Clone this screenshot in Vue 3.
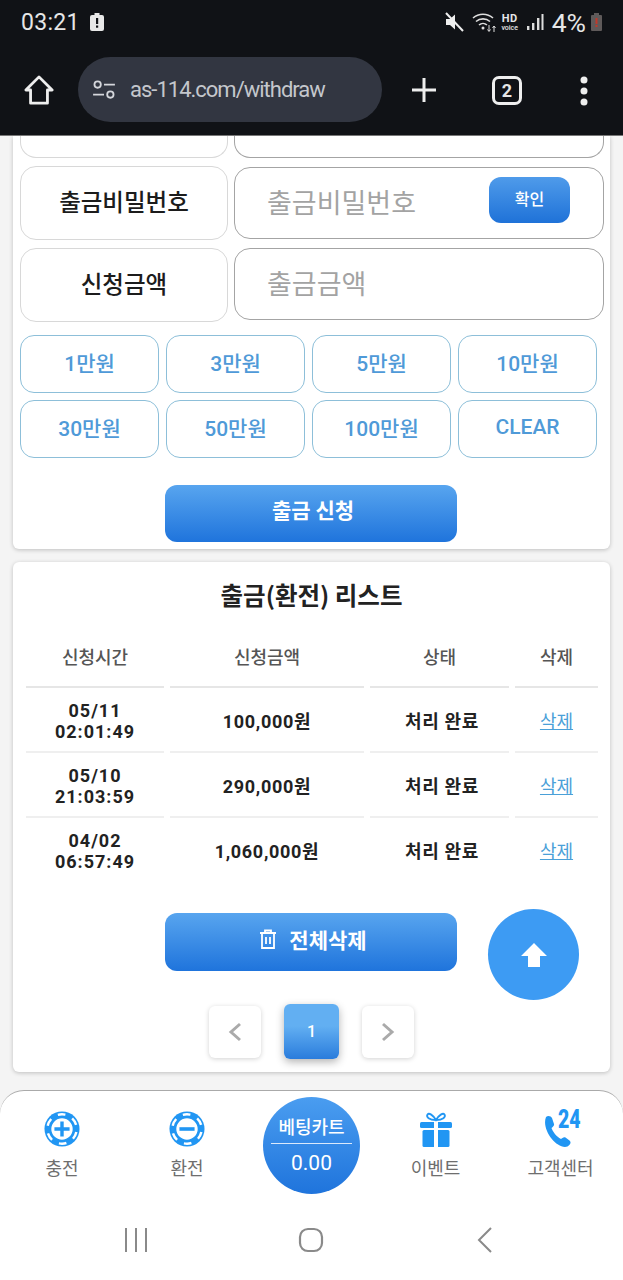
<script setup>
const amounts = ['1만원','3만원','5만원','10만원','30만원','50만원','100만원','CLEAR']
const rows = [
  { d:'05/11', t:'02:01:49', a:'100,000원' },
  { d:'05/10', t:'21:03:59', a:'290,000원' },
  { d:'04/02', t:'06:57:49', a:'1,060,000원' },
]
</script>

<template>
  <div class="screen">
    <header class="chrome">
      <div class="status">
        <span class="time">03:21</span>
        <svg class="alert" width="14" height="18" viewBox="0 0 14 18"><path d="M4.5 0h5v2H12a2 2 0 0 1 2 2v12a2 2 0 0 1-2 2H2a2 2 0 0 1-2-2V4a2 2 0 0 1 2-2h2.500z" fill="#e8e8e8"/><rect x="6" y="5" width="2.200" height="6" fill="#101216"/><rect x="6" y="12.500" width="2.200" height="2.200" fill="#101216"/></svg>
        <span class="spacer"></span>
        <svg width="20" height="20" viewBox="0 0 20 20" class="mute"><path d="M1 7h4l5-4.500v15L5 13H1z" fill="#eee"/><path d="M1 1l17 18" stroke="#eee" stroke-width="2"/></svg>
        <svg width="26" height="22" viewBox="0 0 26 22" class="wifi" fill="none" stroke="#ddd" stroke-width="1.600"><path d="M1 7a15 15 0 0 1 20 0M4 10.500a10.500 10.500 0 0 1 14 0M7 14a6 6 0 0 1 8 0"/><circle cx="11" cy="17" r="1.500" fill="#ddd" stroke="none"/><path d="M17 14v6M15.500 18.500l1.500 2 1.500-2M22 21v-6M20.500 17l1.500-2 1.500 2" stroke-width="1"/></svg>
        <span class="hd"><b>HD</b><i>voice</i></span>
        <svg width="18" height="18" viewBox="0 0 18 18" class="signal" fill="#ddd"><rect x="1" y="13" width="2.400" height="4"/><rect x="6" y="10" width="2.400" height="7"/><rect x="11" y="5" width="2.400" height="12"/><rect x="15.500" y="1" width="2" height="16"/></svg>
        <span class="pct">4%</span>
        <svg class="batt" width="11" height="18" viewBox="0 0 11 18"><path d="M3 0h5v2h2a1 1 0 0 1 1 1v14a1 1 0 0 1-1 1H1a1 1 0 0 1-1-1V3a1 1 0 0 1 1-1h2z" fill="#5f5a5a"/><rect x="4.500" y="5" width="2" height="6" fill="#c0392b"/><rect x="4.500" y="12" width="2" height="2" fill="#c0392b"/></svg>
      </div>
      <div class="toolbar">
        <svg class="home" width="30" height="30" viewBox="0 0 32 32" fill="none" stroke="#eee" stroke-width="3" stroke-linejoin="round"><path d="M2 16L16 2l14 14h-5v14H7V16z"/></svg>
        <div class="omni">
          <svg width="24" height="20" viewBox="0 0 26 22" fill="none" stroke="#d5d7dc" stroke-width="2"><circle cx="6" cy="5" r="3.500"/><path d="M13 5h12M1 16h12"/><circle cx="20" cy="16" r="3.500"/></svg>
          <span class="url">as-114.com/withdraw</span>
        </div>
        <svg class="plus" width="28" height="28" viewBox="0 0 28 28" stroke="#eee" stroke-width="3"><path d="M14 2v24M2 14h24"/></svg>
        <span class="tabs">2</span>
        <svg class="more" width="10" height="30" viewBox="0 0 10 30" fill="#eee"><circle cx="5" cy="4" r="3.500"/><circle cx="5" cy="15" r="3.500"/><circle cx="5" cy="26" r="3.500"/></svg>
      </div>
    </header>

    <main class="page">
      <section class="card form-card">
        <div class="form-row stub">
          <div class="label"></div>
          <div class="field"></div>
        </div>
        <div class="form-row">
          <div class="label">출금비밀번호</div>
          <div class="field first">
            <span class="ph">출금비밀번호</span>
            <button class="confirm">확인</button>
          </div>
        </div>
        <div class="form-row">
          <div class="label">신청금액</div>
          <div class="field"><span class="ph">출금금액</span></div>
        </div>
        <div class="amounts">
          <button v-for="a in amounts" :key="a" class="amt">{{ a }}</button>
        </div>
        <button class="primary">출금 신청</button>
      </section>

      <section class="card list-card">
        <h2>출금(환전) 리스트</h2>
        <table>
          <colgroup><col class="c1"><col class="c2"><col class="c3"><col class="c4"></colgroup>
          <thead><tr><th>신청시간</th><th>신청금액</th><th>상태</th><th>삭제</th></tr></thead>
          <tbody>
            <tr v-for="r in rows" :key="r.d">
              <td class="when">{{ r.d }}<br>{{ r.t }}</td>
              <td>{{ r.a }}</td>
              <td class="state">처리 완료</td>
              <td><a class="del">삭제</a></td>
            </tr>
          </tbody>
        </table>
        <div class="delete-wrap">
          <button class="primary del-all">
            <svg width="18" height="20" viewBox="0 0 18 20" fill="none" stroke="#fff" stroke-width="1.800"><path d="M1 4h16M6 4V1.500h6V4M3 4v15h12V4M7 8v7M11 8v7"/></svg>
            전체삭제
          </button>
          <button class="fab" aria-label="위로">
            <svg width="26" height="26" viewBox="0 0 26 26" fill="#fff"><path d="M13 1l13 13h-7v11H7V14H0z"/></svg>
          </button>
        </div>
        <div class="pager">
          <button class="pg"><svg width="14" height="20" viewBox="0 0 14 20" fill="none" stroke="#aaa" stroke-width="3"><path d="M12 2L3 10l9 8"/></svg></button>
          <button class="pg on">1</button>
          <button class="pg"><svg width="14" height="20" viewBox="0 0 14 20" fill="none" stroke="#aaa" stroke-width="3"><path d="M2 2l9 8-9 8"/></svg></button>
        </div>
      </section>
    </main>

    <nav class="bottom">
      <div class="tab">
        <svg width="36" height="36" viewBox="0 0 38 38"><circle cx="19" cy="19" r="18.500" fill="#2196f3"/><circle cx="19" cy="19" r="15.500" fill="none" stroke="#fff" stroke-width="2.600" stroke-dasharray="8 8.230" transform="rotate(12 19 19)"/><circle cx="19" cy="19" r="12" fill="#fff"/><circle cx="19" cy="19" r="12" fill="none" stroke="#2196f3" stroke-width="1.400"/><path d="M19 11v16M11 19h16" stroke="#2196f3" stroke-width="3.600"/></svg>
        <span>충전</span>
      </div>
      <div class="tab">
        <svg width="36" height="36" viewBox="0 0 38 38"><circle cx="19" cy="19" r="18.500" fill="#2196f3"/><circle cx="19" cy="19" r="15.500" fill="none" stroke="#fff" stroke-width="2.600" stroke-dasharray="8 8.230" transform="rotate(12 19 19)"/><circle cx="19" cy="19" r="12" fill="#fff"/><circle cx="19" cy="19" r="12" fill="none" stroke="#2196f3" stroke-width="1.400"/><path d="M11 19h16" stroke="#2196f3" stroke-width="3.800"/></svg>
        <span>환전</span>
      </div>
      <div class="cart">
        <div class="cart-t">베팅카트</div>
        <div class="cart-v">0.00</div>
      </div>
      <div class="tab">
        <svg width="32" height="36" viewBox="0 0 32 36" fill="#2196f3"><path d="M16 9C13 4 9 1.500 7.500 3.500 6 6 9 9 16 9c7 0 10-3 8.500-5.500C23 1.500 19 4 16 9z" fill="none" stroke="#2196f3" stroke-width="1.800"/><rect x="0" y="11" width="32" height="6" rx="1.500"/><rect x="2.500" y="19" width="27" height="17" rx="1.500"/><rect x="14" y="11" width="4" height="25" fill="#fff"/></svg>
        <span>이벤트</span>
      </div>
      <div class="tab">
        <div class="call">
          <svg width="30" height="32" viewBox="0 0 30 32" fill="#2196f3"><path d="M4 2c2-2 5-1 6 1l2 6c.5 1.500-1 3-2.500 4 1 3 5 9 9.500 11 1-1 3-2.500 4.500-1.500l4 3c2 1.500 1 4-2 6C15 35 -1 15 4 2z"/></svg>
          <b>24</b>
        </div>
        <span>고객센터</span>
      </div>
    </nav>

    <footer class="sysnav">
      <svg width="26" height="26" viewBox="0 0 26 26" stroke="#8a8a8a" stroke-width="2"><path d="M3 1v24M13 1v24M23 1v24"/></svg>
      <svg width="26" height="26" viewBox="0 0 26 26" fill="none" stroke="#8a8a8a" stroke-width="2.200"><rect x="2" y="2" width="22" height="22" rx="8"/></svg>
      <svg width="18" height="28" viewBox="0 0 18 28" fill="none" stroke="#8a8a8a" stroke-width="2"><path d="M15 2L3 14l12 12"/></svg>
    </footer>
  </div>
</template>

<style scoped>
.screen { width: 623px; height: 1280px; overflow: hidden; display: flex; flex-direction: column; background: #f4f4f4; font-family: "Noto Sans CJK KR", Roboto, sans-serif; }
button { font-family: inherit; border: none; padding: 0; }

.chrome { flex: none; height: 136px; box-sizing: border-box; background: #101216; border-bottom: 1px solid #777; color: #e6e6e6; }
.status { height: 44px; display: flex; align-items: center; padding: 0 21px 0 21px; }
.time { font: 400 23px Roboto, sans-serif; letter-spacing: .3px; }
.alert { margin-left: 10px; }
.spacer { flex: 1; }
.wifi { margin-left: 7px; }
.hd { width: 18px; display: flex; flex-direction: column; align-items: center; margin-left: 3px; font-family: Roboto, sans-serif; }
.hd b { font-size: 11px; line-height: 11px; letter-spacing: .5px; }
.hd i { font-size: 7px; line-height: 8px; font-style: normal; font-weight: 500; }
.signal { margin-left: 7px; }
.pct { font: 400 26.500px Roboto, sans-serif; margin-left: 8px; }
.batt { margin-left: 5px; }
.toolbar { height: 78px; margin-top: 13px; display: flex; align-items: flex-start; }
.home { margin: 18px 0 0 24px; }
.omni { width: 304px; height: 65px; margin-left: 24px; border-radius: 33px; background: #323641; display: flex; align-items: center; padding-left: 14px; box-sizing: border-box; gap: 14px; }
.url { font: 400 22px Roboto, sans-serif; letter-spacing: -1px; color: #c4c7cc; }
.plus { margin: 19px 0 0 28px; }
.tabs { box-sizing: border-box; width: 30px; height: 29px; margin: 19px 0 0 54px; border: 3px solid #eee; border-radius: 7px; font: 700 18px/23px Roboto, sans-serif; text-align: center; }
.more { margin: 19px 0 0 57px; }

.page { flex: 1; min-height: 0; padding: 0 13px; overflow: hidden; }
.card { background: #fff; border-radius: 0 0 6px 6px; box-shadow: 0 1px 4px rgba(0,0,0,.22); }
.form-card { padding: 0 7px 7px; height: 413px; box-sizing: border-box; margin-bottom: 13px; }
.form-row { display: grid; grid-template-columns: 208px 370px; gap: 6px; height: 74px; margin-bottom: 8px; }
.form-row.stub { height: 22px; }
.form-row.stub > div { height: auto; border-radius: 0 0 16px 16px; border-top: none; }
.label { box-sizing: border-box; padding-bottom: 4px; border: 1px solid #d8d8d8; border-radius: 16px; display: flex; align-items: center; justify-content: center; font-size: 23.500px; font-weight: 500; color: #1c1c1c; }
.field { position: relative; box-sizing: border-box; border: 1px solid #a4a4a4; border-radius: 16px; display: flex; align-items: center; padding: 0 0 4px 32px; height: 72px; }
.field.first { margin-top: 1px; }
.ph { font-size: 27px; color: #a3a3a3; }
.confirm { position: absolute; right: 33px; top: 9px; width: 81px; height: 46px; padding-bottom: 4px; border-radius: 12px; background: linear-gradient(#4f9bea, #1f72d8); color: #fff; font-size: 16px; font-weight: 500; }
.amounts { display: grid; grid-template-columns: repeat(4, 139px); gap: 7px; margin-top: 13px; }
.amt { height: 58px; padding-bottom: 4px; background: #fff; border: 1px solid #8dbfd9; border-radius: 14px; color: #4f9ad8; font-size: 21px; font-weight: 500; font-family: Roboto, "Noto Sans CJK KR", sans-serif; }
.primary { display: block; width: 292px; height: 57px; padding: 0 0 10px 4px; border-radius: 12px; background: linear-gradient(#58a5ef, #1f74dc); color: #fff; font-size: 21px; font-weight: 700; margin: 27px 0 0 145px; }

.list-card { border-radius: 6px; padding: 13px 13px 0; height: 510px; box-sizing: border-box; }
h2 { margin: 0; font-size: 24.500px; line-height: 40px; font-weight: 700; text-align: center; color: #222; }
table { border-collapse: separate; border-spacing: 6px 0; width: 584px; margin: 19px 0 0 -6px; table-layout: fixed; }
.c1 { width: 138px; } .c2 { width: 194px; } .c3 { width: 139px; } .c4 { width: 83px; }
th { height: 44px; padding: 0 0 8px; border-bottom: 2px solid #e6e6e6; font-size: 18px; font-weight: 500; color: #555; }
td { height: 59px; padding: 4px 0 0; border-bottom: 2px solid #efefef; text-align: center; font: 700 18px/21px Roboto, "Noto Sans CJK KR", sans-serif; color: #222; letter-spacing: .7px; }
tbody tr:last-child td { border-bottom-color: transparent; }
td.when { padding-top: 2px; height: 61px; letter-spacing: 1px; }
.state { padding-left: 5px; }
.del { color: #4aa0d8; text-decoration: underline; font-weight: 400; letter-spacing: 0; }
.delete-wrap { position: relative; height: 92px; }
.del-all { position: absolute; left: 139px; top: 30px; height: 58px; margin: 0; padding-bottom: 6px; display: flex; align-items: center; justify-content: center; gap: 12px; }
.fab { position: absolute; left: 462px; top: 26px; width: 91px; height: 91px; border-radius: 50%; background: #3d9bf3; display: flex; align-items: center; justify-content: center; }
.pager { display: flex; justify-content: center; gap: 23px; margin-top: 31px; }
.pg { width: 52px; height: 52px; border-radius: 6px; background: #fff; box-shadow: 0 1px 5px rgba(0,0,0,.18); display: flex; align-items: center; justify-content: center; }
.pg.on { width: 55px; height: 55px; margin-top: -2px; background: linear-gradient(#62aff2 40%, #2a7cdc); color: #fff; font: 500 16px Roboto, sans-serif; box-shadow: 0 3px 8px rgba(0,0,0,.3); }

.bottom { flex: none; height: 110px; box-sizing: border-box; background: #fff; border-top: 1px solid #aaa; border-radius: 24px 24px 0 0; display: grid; grid-template-columns: 124px 126px 123px 125px 125px; padding-top: 20px; }
.tab { display: flex; flex-direction: column; align-items: center; gap: 8px; font-size: 18px; color: #6e6e6e; }
.tab span { line-height: 24px; }
.cart { justify-self: center; width: 97px; height: 97px; margin-top: -14px; border-radius: 50%; background: linear-gradient(#4a9df0, #1f74dc); color: #fff; text-align: center; }
.cart-t { margin: 14px 8px 0; padding-bottom: 2px; border-bottom: 1px solid #dbe9fb; font-size: 18px; line-height: 30px; font-weight: 500; white-space: nowrap; }
.cart-v { font: 400 21px/38px Roboto, sans-serif; }
.call { position: relative; width: 38px; height: 36px; padding-top: 4px; box-sizing: border-box; }
.call b { position: absolute; left: 16px; top: -3px; font: 900 25px/24px Roboto, sans-serif; color: #2196f3; transform: scaleX(.78); transform-origin: left; }
.sysnav { flex: none; height: 80px; background: #fff; display: grid; grid-template-columns: 100px 1fr 100px; padding: 0 88px 0 86px; justify-items: center; align-items: center; }
</style>
